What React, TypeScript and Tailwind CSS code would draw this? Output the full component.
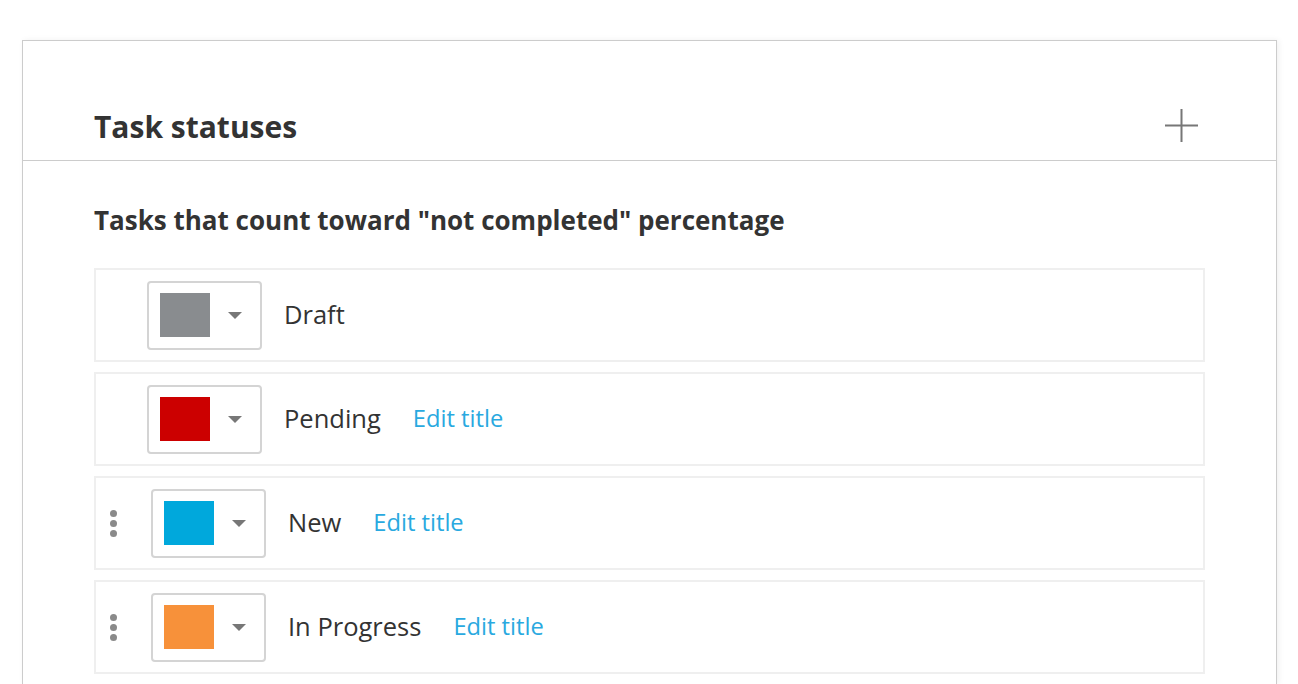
import React from "react";

type Row = { label: string; color: string; edit: boolean; drag: boolean };

const rows: Row[] = [
  { label: "Draft", color: "#898c8f", edit: false, drag: false },
  { label: "Pending", color: "#cc0000", edit: true, drag: false },
  { label: "New", color: "#00a8dc", edit: true, drag: true },
  { label: "In Progress", color: "#f7913a", edit: true, drag: true },
];

function Caret() {
  return (
    <svg width="14" height="7" viewBox="0 0 14 7" className="block">
      <path d="M0 0 L14 0 L7 7 Z" fill="#777777" />
    </svg>
  );
}

function StatusRow({ row }: { row: Row }) {
  return (
    <div className="h-[94px] border-2 border-[#efefef] flex items-center">
      {row.drag ? (
        <div className="pl-[14px] pr-[34px] flex flex-col gap-[3px]">
          <span className="block w-[7px] h-[7px] rounded-full bg-[#8a8a8a]" />
          <span className="block w-[7px] h-[7px] rounded-full bg-[#8a8a8a]" />
          <span className="block w-[7px] h-[7px] rounded-full bg-[#8a8a8a]" />
        </div>
      ) : (
        <div className="w-[51px]" />
      )}
      <div className="w-[115px] h-[69px] border-2 border-[#d4d4d4] rounded-[4px] flex items-center pl-[11px] shrink-0">
        <div className="w-[50px] h-[44px]" style={{ backgroundColor: row.color }} />
        <div className="ml-[18px]">
          <Caret />
        </div>
      </div>
      <span className="ml-[22px] text-[25.5px] text-[#333333] leading-none">{row.label}</span>
      {row.edit && (
        <span className="ml-[32px] text-[23.7px] text-[#29a9e0] leading-none">Edit title</span>
      )}
    </div>
  );
}

export default function App() {
  return (
    <div
      className="w-[1298px] h-[684px] overflow-hidden bg-white pt-[40px] pl-[22px] pr-[21px]"
      style={{ fontFamily: '"Open Sans", "Noto Sans", sans-serif' }}
    >
      <div className="h-full border border-b-0 border-[#cccccc] shadow-[2px_0_6px_rgba(0,0,0,0.06)]">
        <div className="h-[120px] border-b border-[#cccccc] pt-[66px] pl-[71px] pr-[78px] flex items-start justify-between">
          <h1 className="text-[30px] leading-[40px] font-bold text-[#333333]">Task statuses</h1>
          <svg width="33" height="33" viewBox="0 0 33 33" className="mt-[2px]">
            <path d="M16.5 0 V33 M0 16.5 H33" stroke="#777777" strokeWidth="2" />
          </svg>
        </div>
        <div className="px-[71px]">
          <h2 className="mt-[43px] text-[26px] leading-[32px] font-bold text-[#333333]">
            Tasks that count toward "not completed" percentage
          </h2>
          <div className="mt-[32px] flex flex-col gap-[10px]">
            {rows.map((r) => (
              <StatusRow key={r.label} row={r} />
            ))}
          </div>
        </div>
      </div>
    </div>
  );
}
